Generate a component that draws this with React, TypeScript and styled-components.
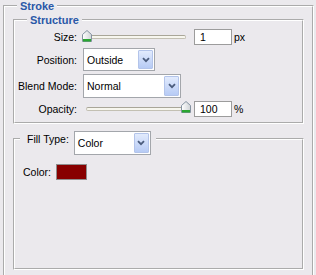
import React from "react";
import styled, { createGlobalStyle } from "styled-components";

const GlobalStyle = createGlobalStyle`
  html, body {
    margin: 0;
    padding: 0;
    background: #ebe9ed;
    overflow: hidden;
  }
  body {
    font-family: "Liberation Sans", Arial, sans-serif;
    font-size: 10.5px;
    color: #000;
  }
`;

const Page = styled.div`
  width: 316px;
  height: 275px;
  padding-left: 3px;
  box-sizing: border-box;
`;

const OuterBox = styled.fieldset`
  margin: 0;
  width: 311px;
  min-width: 0;
  box-sizing: border-box;
  border: 2px groove #fff;
  padding: 2px 8px 12px;
`;

const Title = styled.legend<{ $indent: number; $lh: number }>`
  margin-left: ${({ $indent }) => $indent}px;
  padding: 0 3px;
  font-weight: bold;
  font-size: 11px;
  line-height: ${({ $lh }) => $lh}px;
  color: #2a58a8;
`;

const StructureBox = styled.fieldset`
  margin: 0;
  min-width: 0;
  border: 2px groove #fff;
  padding: 3px 4px 5px;
`;

const Grid = styled.div`
  display: grid;
  grid-template-columns: 58px auto;
  column-gap: 5px;
  row-gap: 3px;
  align-items: center;
`;

const Label = styled.span`
  justify-self: end;
  white-space: nowrap;
  line-height: 12px;
`;

const Controls = styled.div`
  display: flex;
  align-items: center;
  height: 16px;
`;

const SliderWrap = styled.div`
  position: relative;
  width: 109px;
  height: 16px;
  display: flex;
  align-items: center;
  margin-right: 3px;
`;

const Track = styled.div`
  flex: 1;
  margin: 0 5px 0 4px;
  height: 2px;
  border: 1px solid #c3c0b3;
  border-top-color: #a9a698;
  border-radius: 2px;
  background: #f7f6ee;
`;

const Thumb = styled.svg<{ $top: number }>`
  position: absolute;
  top: ${({ $top }) => $top}px;
`;

const NumField = styled.input`
  width: 38px;
  height: 16px;
  box-sizing: border-box;
  border: 1px solid #9c9c9c;
  padding: 0 0 0 5px;
  margin: 0 2px 0 0;
  font: inherit;
  color: #000;
  background: #fff;
  outline: none;
`;

const Unit = styled.span`
  line-height: 12px;
`;

const SelectBox = styled.div<{ $w: number; $h: number; $ml: number }>`
  display: flex;
  align-items: stretch;
  width: ${({ $w }) => $w}px;
  height: ${({ $h }) => $h}px;
  margin-left: ${({ $ml }) => $ml}px;
  box-sizing: border-box;
  border: 1px solid #a3a6ab;
  padding: 1px;
  background: #fff;
  flex-shrink: 0;
`;

const SelectValue = styled.span`
  flex: 1;
  display: flex;
  align-items: center;
  padding-left: 2px;
`;

const DropButton = styled.span`
  width: 15px;
  box-sizing: border-box;
  border: 1px solid #b3c4ea;
  border-radius: 1px;
  background: linear-gradient(#e2ebfd, #b7cbf5);
  display: flex;
  align-items: center;
  justify-content: center;
`;

const FillBox = styled.fieldset`
  margin: 7px 0 0;
  min-width: 0;
  height: 139px;
  box-sizing: border-box;
  border: 2px groove #fff;
  padding: 17px 8px 0;
`;

const FillLegend = styled.legend`
  display: flex;
  align-items: flex-start;
  height: 16px;
  margin-left: -3px;
  padding: 0 5px 0 7px;
  line-height: 16px;
`;

const ColorRow = styled.div`
  display: flex;
  align-items: center;
  gap: 5px;
`;

const Swatch = styled.div<{ $color: string }>`
  width: 31px;
  height: 16px;
  box-sizing: border-box;
  border: 1px solid #8e8e8e;
  background: ${({ $color }) => $color};
`;

function Select({ value, width, height, ml = 0 }: { value: string; width: number; height: number; ml?: number }) {
  return (
    <SelectBox $w={width} $h={height} $ml={ml}>
      <SelectValue>{value}</SelectValue>
      <DropButton>
        <svg width="8" height="6" viewBox="0 0 8 6">
          <path d="M1 1.2 L4 4.2 L7 1.2" stroke="#4b5c7d" strokeWidth="1.8" fill="none" />
        </svg>
      </DropButton>
    </SelectBox>
  );
}

function Slider({ pos, top }: { pos: number; top: number }) {
  return (
    <SliderWrap>
      <Track />
      <Thumb $top={top} width="10" height="12" viewBox="0 0 10 12" style={{ left: Math.round(pos * 99) }}>
        <defs>
          <linearGradient id="tg" x1="0" x2="1" y1="0" y2="0">
            <stop offset="0" stopColor="#ffffff" />
            <stop offset="1" stopColor="#cfd3d6" />
          </linearGradient>
        </defs>
        <path d="M5 0.5 L9.5 4.5 V11.5 H0.5 V4.5 Z" fill="url(#tg)" stroke="#8592a0" />
        <rect x="1" y="9" width="8" height="2.5" fill="#2aa632" />
      </Thumb>
    </SliderWrap>
  );
}

export default function App() {
  return (
    <Page>
      <GlobalStyle />
      <OuterBox>
        <Title $indent={4} $lh={12}>Stroke</Title>
        <StructureBox>
          <Title $indent={8} $lh={12}>Structure</Title>
          <Grid>
            <Label>Size:</Label>
            <Controls>
              <Slider pos={0} top={1} />
              <NumField readOnly value="1" />
              <Unit>px</Unit>
            </Controls>

            <Label>Position:</Label>
            <Select value="Outside" width={72} height={23} ml={1} />

            <Label>Blend Mode:</Label>
            <Select value="Normal" width={98} height={24} ml={1} />

            <Label>Opacity:</Label>
            <Controls>
              <Slider pos={1} top={0} />
              <NumField readOnly value="100" />
              <Unit>%</Unit>
            </Controls>
          </Grid>
        </StructureBox>

        <FillBox>
          <FillLegend>
            <span>Fill Type:</span>
            <Select value="Color" width={77} height={24} ml={5} />
          </FillLegend>
          <ColorRow>
            <Label>Color:</Label>
            <Swatch $color="#880000" />
          </ColorRow>
        </FillBox>
      </OuterBox>
    </Page>
  );
}
